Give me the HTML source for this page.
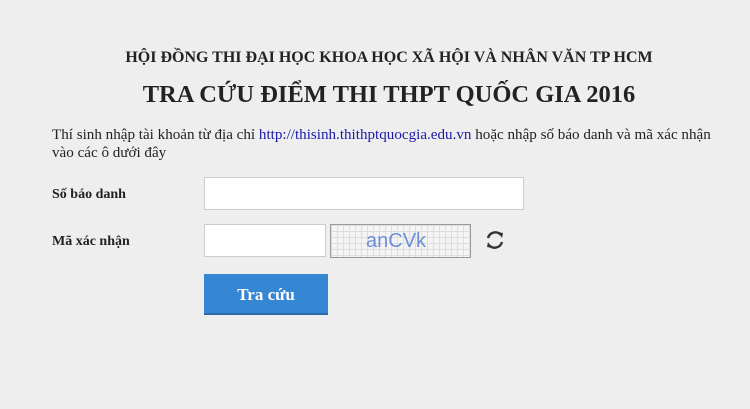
<!DOCTYPE html>
<html><head><meta charset="utf-8"><style>
body{margin:0;width:750px;height:409px;background:#eeeeee;font-family:"Liberation Serif",serif;color:#222;position:relative;overflow:hidden}
.a{position:absolute}
.h1{left:0;width:778px;text-align:center;top:49px;font-weight:bold;font-size:16px;white-space:nowrap}
.h2{left:0;width:778px;text-align:center;top:81px;font-weight:bold;font-size:24.5px;white-space:nowrap}
.p{left:52px;top:126px;font-size:15.1px;line-height:18px;width:690px;white-space:nowrap}
.p span{color:#1a1aa6}
.lb{left:52px;font-weight:bold;font-size:14px}
.in{background:#fff;border:1px solid #ccc;box-sizing:border-box}
.btn{left:204px;top:274px;width:124px;height:41px;background:#3587d4;color:#fff;font-weight:bold;font-size:17px;text-align:center;line-height:41px;border-bottom:2px solid #2a6aa8;box-sizing:border-box}
.cap{left:330px;top:224px;width:141px;height:34px;border:1px solid #999;box-sizing:border-box;background:#f4f4f4;background-image:linear-gradient(#ddd 1px,transparent 1px),linear-gradient(90deg,#ddd 1px,transparent 1px);background-size:6px 6px;font-family:"Liberation Sans",sans-serif;color:#6f8fd8;font-size:20px;line-height:32px;padding-left:35px}
</style></head><body>
<div class="a h1">HỘI ĐỒNG THI ĐẠI HỌC KHOA HỌC XÃ HỘI VÀ NHÂN VĂN TP HCM</div>
<div class="a h2">TRA CỨU ĐIỂM THI THPT QUỐC GIA 2016</div>
<div class="a p">Thí sinh nhập tài khoản từ địa chỉ <span>http://thisinh.thithptquocgia.edu.vn</span> hoặc nhập số báo danh và mã xác nhận<br>vào các ô dưới đây</div>
<div class="a lb" style="top:187px">Số báo danh</div>
<div class="a in" style="left:204px;top:177px;width:320px;height:33px"></div>
<div class="a lb" style="top:234px">Mã xác nhận</div>
<div class="a in" style="left:204px;top:224px;width:122px;height:33px"></div>
<div class="a cap">anCVk</div>
<svg class="a" style="left:484px;top:229px" width="22" height="22" viewBox="0 0 22 22"><path d="M4 9A7.5 7.5 0 0 1 17 6" fill="none" stroke="#333" stroke-width="2.4"/><path d="M18 13A7.5 7.5 0 0 1 5 16" fill="none" stroke="#333" stroke-width="2.4"/><path d="M14 3l5 1-1 5z" fill="#333"/><path d="M8 19l-5-1 1-5z" fill="#333"/></svg>
<div class="a btn">Tra cứu</div>
</body></html>
